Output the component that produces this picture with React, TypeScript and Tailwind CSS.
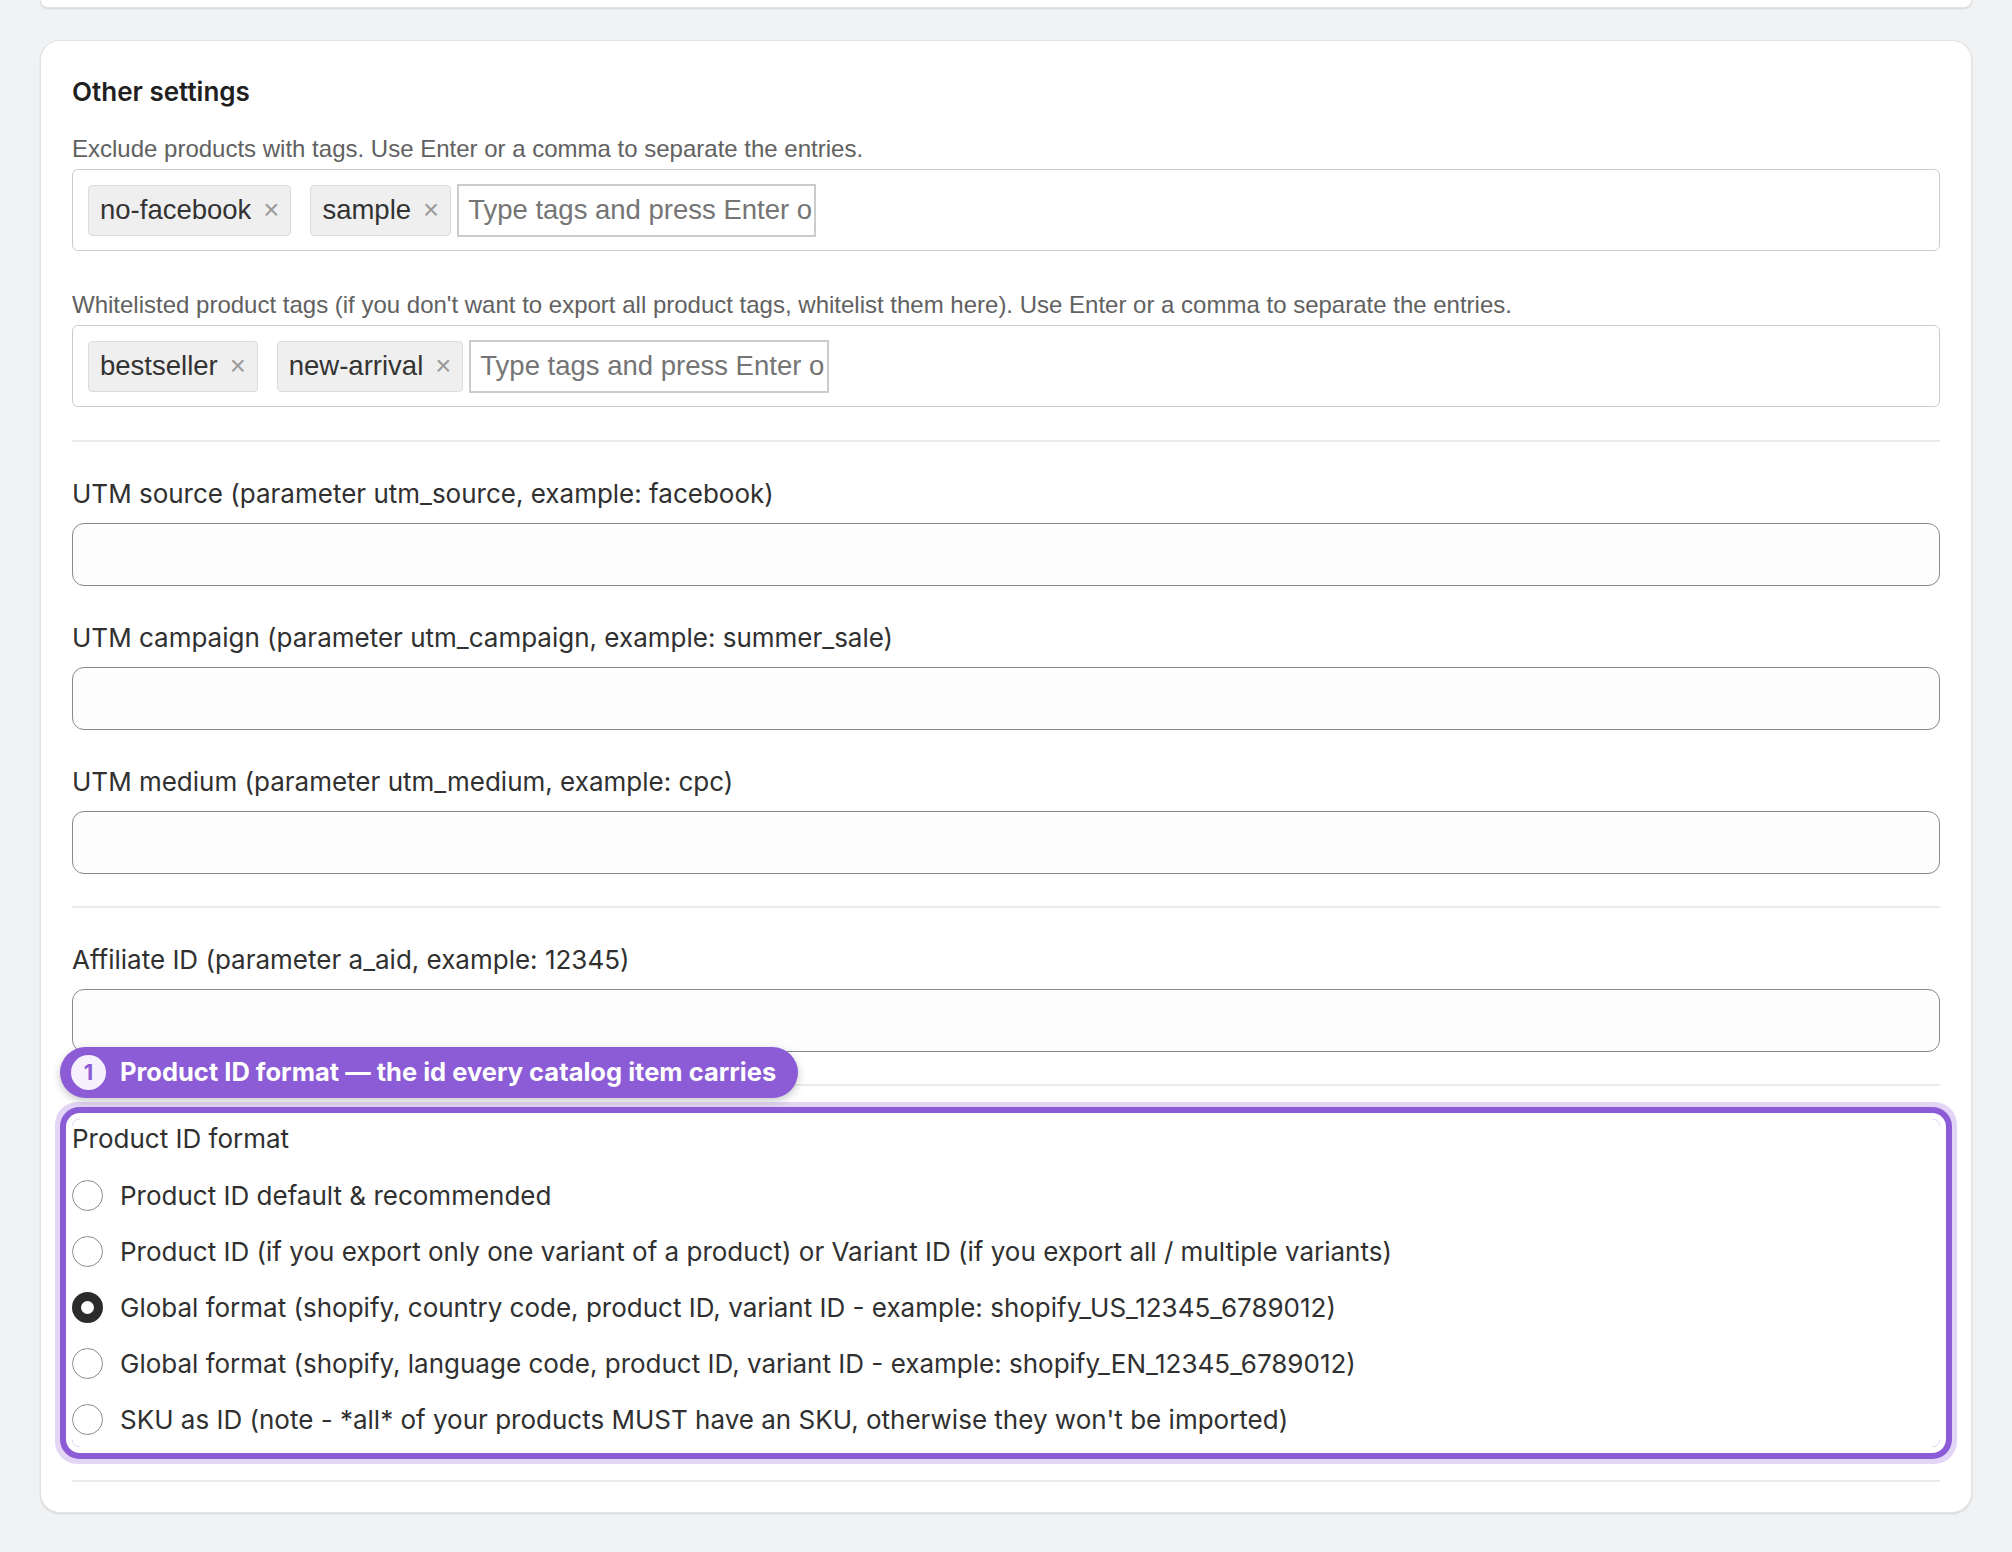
import React from "react";

const tagFont = "font-['Liberation_Sans',Arial,sans-serif]";

const Chip = ({ label, first }: { label: string; first?: boolean }) => (
  <span
    className={`flex h-[51px] items-center rounded-[4px] border-[1.5px] border-[#dcdcdc] bg-[#efefef] px-[11px] text-[27.5px] leading-none text-[#333] ${
      first ? "ml-[15px]" : "ml-[19px]"
    }`}
  >
    {label}
    <span className="ml-[12px] text-[#9a9a9a]">×</span>
  </span>
);

const TagInput = ({ tags, width }: { tags: string[]; width: string }) => (
  <div className={`flex items-center rounded-[6px] border-[1.5px] border-[#cccccc] py-[13.5px] ${tagFont}`}>
    {tags.map((t, i) => (
      <Chip key={t} label={t} first={i === 0} />
    ))}
    <input
      readOnly
      placeholder="Type tags and press Enter or comma"
      className={`ml-[6px] h-[53px] ${width} border-2 border-[#cccccc] pr-[2px] pl-[9px] text-[27.5px] text-[#333] outline-none placeholder:text-[#757575]`}
    />
  </div>
);

const Separator = ({ className = "" }: { className?: string }) => (
  <div className={`h-[2px] bg-[#ebebeb] ${className}`} />
);

const Field = ({ label, className = "" }: { label: string; className?: string }) => (
  <div className={className}>
    <div className="text-[26px] leading-[34px] text-[#303030]">{label}</div>
    <input
      readOnly
      className="mt-[12px] block h-[63px] w-full rounded-[12px] border-[1.5px] border-[#8a8a8a] bg-[#fdfdfd] outline-none"
    />
  </div>
);

const options = [
  "Product ID default & recommended",
  "Product ID (if you export only one variant of a product) or Variant ID (if you export all / multiple variants)",
  "Global format (shopify, country code, product ID, variant ID - example: shopify_US_12345_6789012)",
  "Global format (shopify, language code, product ID, variant ID - example: shopify_EN_12345_6789012)",
  "SKU as ID (note - *all* of your products MUST have an SKU, otherwise they won't be imported)",
];

const Radio = ({ checked }: { checked: boolean }) =>
  checked ? (
    <span className="h-[31px] w-[31px] shrink-0 rounded-full border-[9px] border-[#2b2b2b] bg-white" />
  ) : (
    <span className="h-[31px] w-[31px] shrink-0 rounded-full border-[1.5px] border-[#8c8c8c] bg-white" />
  );

export default function App() {
  const selected = 2;
  return (
    <div className="min-h-[1552px] bg-[#f1f2f4] px-[40px] pb-[40px] font-['Inter',sans-serif]">
      <div className="h-[8px] rounded-b-[20px] border border-t-0 border-[#e3e3e3] bg-white shadow-[0_1px_2px_rgba(0,0,0,0.12)]" />

      <div className="mt-[32px] rounded-[20px] border border-[#e3e3e3] bg-white px-[31px] pt-[35px] pb-[30px] shadow-[0_1px_2px_rgba(0,0,0,0.12)]">
        <h2 className="text-[26px] font-semibold leading-[32px] text-[#202020]">Other settings</h2>

        <p className={`mt-[26px] mb-[5px] text-[24px] leading-[30px] text-[#616161] ${tagFont}`}>
          Exclude products with tags. Use Enter or a comma to separate the entries.
        </p>
        <TagInput tags={["no-facebook", "sample"]} width="w-[359px]" />

        <p className={`mt-[39px] mb-[5px] text-[24px] leading-[30px] text-[#616161] ${tagFont}`}>
          Whitelisted product tags (if you don't want to export all product tags, whitelist them here). Use Enter or
          a comma to separate the entries.
        </p>
        <TagInput tags={["bestseller", "new-arrival"]} width="w-[360px]" />

        <Separator className="mt-[33px]" />

        <Field className="mt-[35px]" label="UTM source (parameter utm_source, example: facebook)" />
        <Field className="mt-[35px]" label="UTM campaign (parameter utm_campaign, example: summer_sale)" />
        <Field className="mt-[35px]" label="UTM medium (parameter utm_medium, example: cpc)" />

        <Separator className="mt-[32px]" />

        <Field className="mt-[35px]" label="Affiliate ID (parameter a_aid, example: 12345)" />

        <Separator className="mt-[32px]" />

        <div className="relative mt-[33px] rounded-[8px] pt-[3px] shadow-[0_0_0_6px_#ffffff,0_0_0_12px_#8b5cd6,0_0_0_17px_#e2d5f5]">
          <div className="absolute top-[-72px] left-[-12px] flex h-[51px] items-center rounded-full bg-[#8b5cd6] pr-[22px] pl-[11px] shadow-[0_3px_8px_rgba(0,0,0,0.22)]">
            <span className="flex h-[35px] w-[35px] items-center justify-center rounded-full bg-[#f6f1fd] text-[22px] font-bold text-[#8b5cd6]">
              1
            </span>
            <span className="ml-[14px] text-[25.5px] font-bold text-white">
              Product ID format — the id every catalog item carries
            </span>
          </div>

          <div className="text-[26px] leading-[34px] text-[#303030]">Product ID format</div>
          <div className="mt-[11px] flex flex-col">
            {options.map((o, i) => (
              <label key={o} className="flex h-[56px] items-center">
                <Radio checked={i === selected} />
                <span className="ml-[17px] text-[26px] text-[#303030]">{o}</span>
              </label>
            ))}
          </div>
        </div>

        <Separator className="mt-[33px]" />
      </div>
    </div>
  );
}
